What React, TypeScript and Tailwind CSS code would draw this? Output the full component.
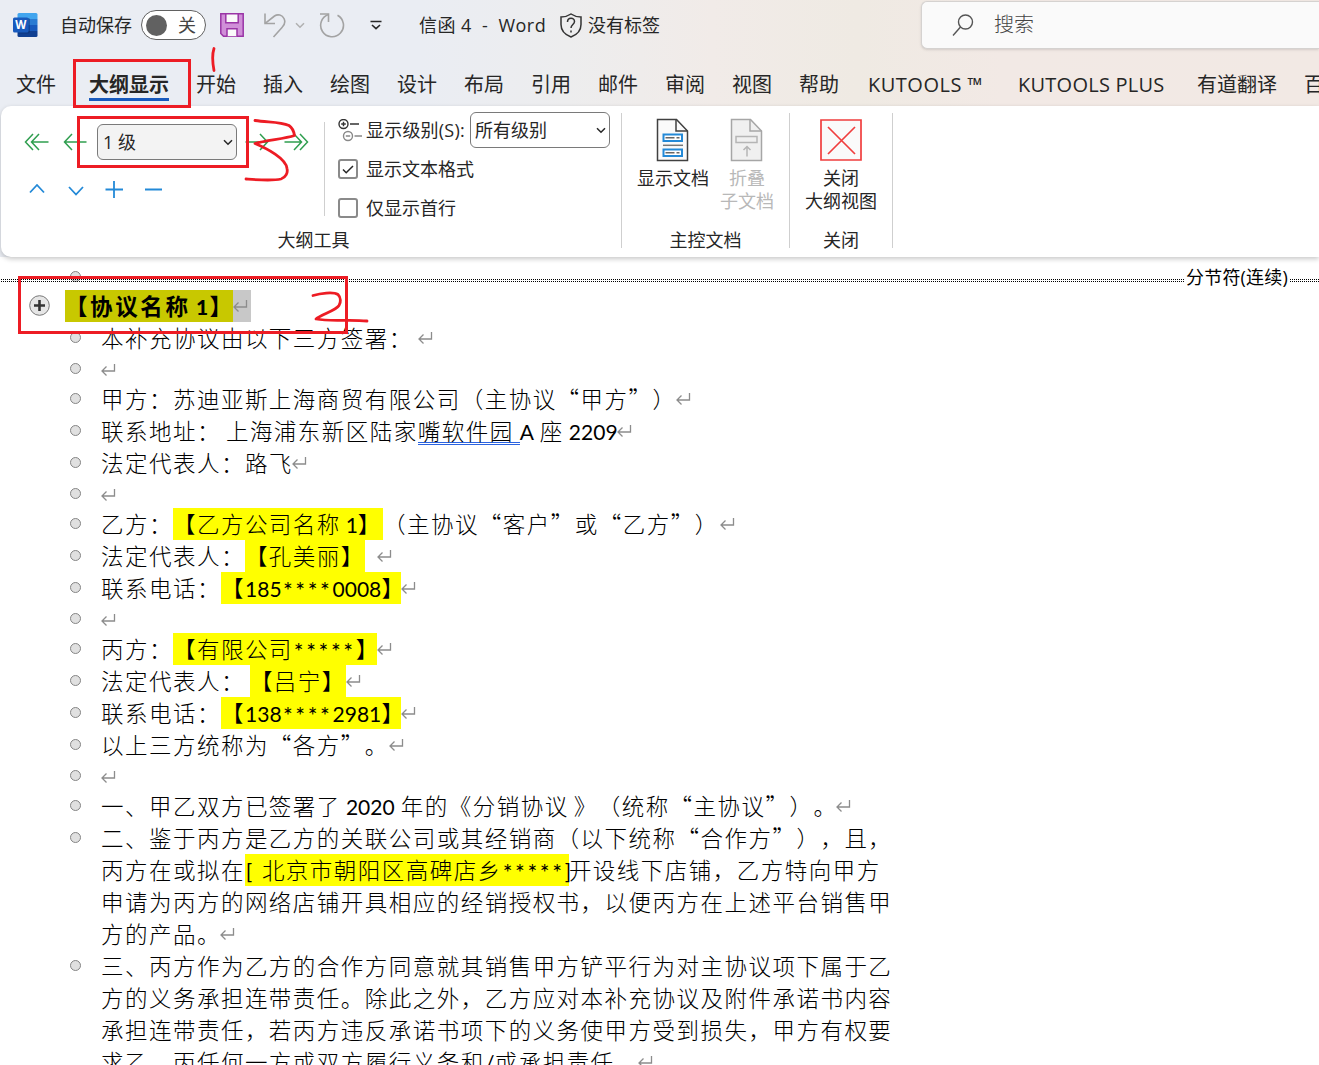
import type { ReactNode } from 'react';

const tabs = [
  { label: '开始', className: 'w-10' },
  { label: '插入', className: 'w-10' },
  { label: '绘图', className: 'w-10' },
  { label: '设计', className: 'w-10' },
  { label: '布局', className: 'w-10' },
  { label: '引用', className: 'w-10' },
  { label: '邮件', className: 'w-10' },
  { label: '审阅', className: 'w-10' },
  { label: '视图', className: 'w-10' },
  { label: '帮助', className: 'w-10' },
  { label: 'KUTOOLS ™', className: 'ml-[2px] w-[116px] tracking-[0.5px]' },
  { label: 'KUTOOLS PLUS', className: 'ml-[7px] w-[147px] tracking-[0.25px]' },
  { label: '有道翻译', className: 'ml-[5px] w-20' },
  { label: '百', className: 'w-10' },
];

function WordLogo() {
  return (
    <svg width="25" height="25" viewBox="0 0 25 25">
      <path d="M6 0h17a1.5 1.5 0 0 1 1.500 1.500V6H4.500V1.500A1.500 1.500 0 0 1 6 0z" fill="#41a5ee" />
      <path d="M4.500 6h20v6h-20z" fill="#2b7cd3" />
      <path d="M4.500 12h20v6h-20z" fill="#185abd" />
      <path d="M4.500 18h20v4.500A1.500 1.500 0 0 1 23 24H6a1.500 1.500 0 0 1-1.500-1.500z" fill="#103f91" />
      <path d="M5 5h10.500a1.500 1.500 0 0 1 1.500 1.500v12a2 2 0 0 1-2 2H5z" fill="#0b2c66" opacity=".45" />
      <rect x="0" y="4.500" width="15.500" height="15" rx="1.500" fill="#185abd" />
      <text x="7.700" y="16.300" textAnchor="middle" fontFamily="Open Sans, sans-serif" fontWeight="700" fontSize="11.500" fill="#fff">
        W
      </text>
    </svg>
  );
}

function SaveIcon() {
  return (
    <svg className="ml-[14px]" width="24" height="24" viewBox="0 0 24 24" fill="none" stroke="#9a35a6" strokeWidth="1.500">
      <path d="M.8.800h22.400v22.400H3.500L.800 20.500z" fill="#d08fd8" />
      <path d="M5.800.800h12.400v9H5.800z" fill="#fafafa" />
      <path d="M7 23.200v-7.400h10v7.400" fill="#fafafa" />
    </svg>
  );
}

function Chevron({ className }: { className?: string }) {
  return (
    <svg className={className} width="10" height="7" viewBox="0 0 10 7" fill="none" stroke="currentColor" strokeWidth="1.500">
      <path d="M1 1.200l4 4 4-4" />
    </svg>
  );
}

function TitleBar() {
  return (
    <div className="flex h-[50px] items-center pl-[13px] text-[18px] text-[#262626]">
      <WordLogo />
      <span className="ml-[22px] w-[72px] whitespace-nowrap">自动保存</span>
      <div className="ml-[9px] flex h-[30px] w-[65px] shrink-0 items-center justify-between rounded-full border border-[#616161] bg-white pl-1 pr-[9px]">
        <span className="h-[21px] w-[21px] rounded-full bg-[#616161]" />
        <span className="text-[#444]">关</span>
      </div>
      <SaveIcon />
      <svg className="ml-[20px]" width="22" height="25" viewBox="0 0 22 25" fill="none" stroke="#a3a3a3" strokeWidth="1.600">
        <path d="M1 .500v10h10" />
        <path d="M1.200 10.300L10.500 3A6.500 6.500 0 0 1 20 5.500c1.700 3.500.500 6.500-2 9L9.500 24" />
      </svg>
      <Chevron className="ml-[9px] text-[#b0b0b0]" />
      <svg className="ml-[14px]" width="26" height="26" viewBox="0 0 26 26" fill="none" stroke="#a3a3a3" strokeWidth="1.600">
        <path d="M1 2h8.500v8" />
        <path d="M9.500 2.500A11.400 11.400 0 1 0 18.500 3.300" />
      </svg>
      <svg className="ml-[25px]" width="12" height="12" viewBox="0 0 12 12" fill="none" stroke="#262626" strokeWidth="1.600">
        <path d="M.500 2.500h11M2 6l4 3.700L10 6" />
      </svg>
      <span className="ml-[37px] w-[128px] whitespace-pre tracking-[0.45px]">信函 4  -  Word</span>
      <svg className="ml-[13px]" width="22" height="25" viewBox="0 0 22 25" fill="none" stroke="#333" strokeWidth="1.500">
        <path d="M11 1c3 2 6 3 10 3v7.500c0 6-3.500 10-10 12.500C4.500 21.500 1 17.500 1 11.500V4c4 0 7-1 10-3z" />
        <path d="M7.500 9c0-5 7-5 7-.500 0 3-3.500 3-3.500 6.500M11 17.500v2" />
      </svg>
      <span className="ml-[6px] w-[73px] whitespace-nowrap">没有标签</span>
      <div className="ml-[260px] mt-[1px] flex h-[48px] flex-1 items-center self-start rounded-l-md border border-r-0 border-[#d5d2d0] bg-[#fafafa] pl-[30px] text-[20px] font-light text-[#444] shadow">
        <svg width="22" height="23" viewBox="0 0 22 23" fill="none" stroke="#555" strokeWidth="1.400">
          <circle cx="13.500" cy="8" r="7" />
          <path d="M8.500 13L1 21.500" />
        </svg>
        <span className="ml-[20px]">搜索</span>
      </div>
    </div>
  );
}

function TabBar() {
  return (
    <nav className="flex h-[56px] gap-[27px] overflow-hidden whitespace-nowrap pl-4 pt-[18px] text-[20px] leading-[33px] text-[#262626]">
      <span className="w-10 shrink-0">文件</span>
      <span className="ml-[6px] h-[33px] w-20 shrink-0 border-b-[3px] border-[#185abd] font-bold">大纲显示</span>
      {tabs.map((tab) => (
        <span key={tab.label} className={`shrink-0 ${tab.className}`}>
          {tab.label}
        </span>
      ))}
    </nav>
  );
}

function SelectBox({ label, className }: { label: string; className: string }) {
  return (
    <div className={`flex h-9 w-[140px] shrink-0 items-center justify-between rounded-md border border-[#7a7a7a] pr-[3px] text-[18px] ${className}`}>
      <span>{label}</span>
      <Chevron />
    </div>
  );
}

function OutlineButtons() {
  return (
    <div className="flex w-[319px] flex-col pl-[18px] pt-[18px]">
      <div className="flex h-9 items-center text-[#2f9e4f]">
        <svg width="25" height="18" viewBox="0 0 25 18" fill="none" stroke="currentColor" strokeWidth="1.500">
          <path d="M9 1L1.500 9 9 17M15 1L7.500 9l7.500 8M7.500 9H24.500" />
        </svg>
        <svg className="ml-[14px]" width="24" height="18" viewBox="0 0 24 18" fill="none" stroke="currentColor" strokeWidth="1.500">
          <path d="M9 1L1.500 9 9 17M1.500 9H23.500" />
        </svg>
        <SelectBox label="1 级" className="ml-[10px] bg-[#f3f3f3] pl-[5px] text-[#262626]" />
        <svg className="ml-[8px]" width="24" height="18" viewBox="0 0 24 18" fill="none" stroke="currentColor" strokeWidth="1.500">
          <path d="M15 1l7.500 8-7.500 8M22.500 9H.500" />
        </svg>
        <svg className="ml-[15px]" width="25" height="18" viewBox="0 0 25 18" fill="none" stroke="currentColor" strokeWidth="1.500">
          <path d="M16 1l7.500 8-7.500 8M10 1l7.500 8-7.500 8M17.500 9H.500" />
        </svg>
      </div>
      <svg className="ml-1 mt-[20px]" width="136" height="20" viewBox="0 0 136 20" fill="none" stroke="#2389d7" strokeWidth="1.800">
        <path d="M2 12.500l7-7.500 7 7.500M41 7l7 7.500L55 7M86 1v17M77.500 9.500H95M117 9.500h17" />
      </svg>
    </div>
  );
}

function CheckRow({ label, checked }: { label: string; checked?: boolean }) {
  return (
    <div className="flex h-[39px] items-center gap-2">
      <span className="-mt-px flex h-5 w-5 items-center justify-center rounded-[3px] border-2 border-[#8a8a8a]">
        {checked && (
          <svg width="12" height="9" viewBox="0 0 12 9" fill="none" stroke="#262626" strokeWidth="1.500">
            <path d="M1 4.500L4.200 7.700 11 1" />
          </svg>
        )}
      </span>
      <span>{label}</span>
    </div>
  );
}

function LevelIcon() {
  return (
    <svg width="24" height="23" viewBox="0 0 24 23" fill="none" stroke="#333" strokeWidth="1.400">
      <circle cx="5.500" cy="5" r="4.500" />
      <path d="M5.500 2.700v4.600M3.200 5h4.600M12 5h9" />
      <g stroke="#888">
        <circle cx="10" cy="17" r="4.500" />
        <path d="M7.800 17h4.400M16.500 17h7.500" />
      </g>
    </svg>
  );
}

function Divider() {
  return <span className="mt-[7px] h-[135px] w-px bg-[#cfcfcf]" />;
}

function Ribbon() {
  return (
    <section className="relative ml-px flex h-[151px] rounded-l-[10px] bg-white pl-[5px] text-[18px] leading-[23px] text-[#262626] shadow-[0_2px_5px_rgba(0,0,0,0.22)]">
      <div className="flex w-[615px] flex-col">
        <div className="flex h-[123px]">
          <OutlineButtons />
          <span className="-ml-px mt-4 h-[94px] w-px bg-[#cfcfcf]" />
          <div className="ml-[13px] flex flex-col pt-[5px]">
            <div className="flex h-[39px] items-center pb-[1px]">
              <LevelIcon />
              <span className="ml-1 w-[104px] whitespace-nowrap tracking-[0.2px]">显示级别(S):</span>
              <SelectBox label="所有级别" className="bg-white pl-1" />
            </div>
            <CheckRow label="显示文本格式" checked />
            <CheckRow label="仅显示首行" />
          </div>
        </div>
        <span className="text-center">大纲工具</span>
      </div>
      <Divider />
      <div className="flex w-[167px] flex-col items-center">
        <div className="flex h-[123px] w-full pl-[13px] pt-[12px]">
          <div className="flex w-[76px] flex-col items-center">
            <svg width="34" height="44" viewBox="0 0 34 44" fill="none" stroke="#404040" strokeWidth="1.500">
              <path d="M1.500 1.500h19l11 11.500v29.500h-30z" fill="#fafafa" />
              <path d="M20 1.500V13h11.500" />
              <path d="M7.500 16.500h18.500v6.500H7.500zM7.500 31.500h18.500V38H7.500z" fill="#fff" stroke="#2389d7" strokeWidth="2" />
              <path d="M7 27.300h20" stroke="#777" />
              <path d="M9.500 19.700h9M20.500 19.700h3M9.500 34.700h9M20.500 34.700h3" stroke="#666" />
            </svg>
            <span className="mt-[5px] whitespace-nowrap">显示文档</span>
          </div>
          <div className="flex w-[72px] flex-col items-center text-center text-[#b8b8b8]">
            <svg width="34" height="44" viewBox="0 0 34 44" fill="none" stroke="#a6a6a6" strokeWidth="1.500">
              <path d="M1.500 1.500h19l11 11.500v29.500h-30z" fill="#f0f0f0" />
              <path d="M20 1.500V13h11.500" />
              <path d="M6 18.500h21v6H6zM17 38.500V29M13.500 32l3.500-3.500 3.500 3.500" stroke="#b5b5b5" />
            </svg>
            <span className="mt-[5px]">
              折叠
              <br />
              子文档
            </span>
          </div>
        </div>
        <span>主控文档</span>
      </div>
      <Divider />
      <div className="flex w-[102px] flex-col items-center">
        <div className="flex h-[123px] flex-col items-center pt-[13px] text-center">
          <svg width="42" height="42" viewBox="0 0 42 42" fill="none" stroke="#f03e3e" strokeWidth="1.700">
            <path d="M1 1h40v40H1z" fill="#fafafa" />
            <path d="M8 8l27 27M35 8L8 35" />
          </svg>
          <span className="mt-[6px] whitespace-nowrap">
            关闭
            <br />
            大纲视图
          </span>
        </div>
        <span>关闭</span>
      </div>
      <Divider />
    </section>
  );
}

function Return({ className = 'ml-px' }: { className?: string }) {
  return (
    <svg className={`mt-[9px] shrink-0 ${className}`} width="15" height="13" viewBox="0 0 15 13" fill="none" stroke="#8c8c8c" strokeWidth="1.300">
      <path d="M13.500 1v7H1M5.500 3.500L1 8l4.500 4.500" />
    </svg>
  );
}

function Line({ children, bullet = true }: { children: ReactNode; bullet?: boolean }) {
  return (
    <div className="flex h-8 items-start whitespace-pre pl-[70px]">
      <span className="mr-[20px] mt-[10px] flex w-[11px] shrink-0">
        {bullet && <span className="h-[11px] w-[11px] rounded-full border border-[#858585] bg-[#e0e0e0]" />}
      </span>
      {children}
    </div>
  );
}

function BlankLine() {
  return (
    <div className="flex h-[29px] items-start pl-[70px]">
      <span className="mr-[19px] mt-[9px] h-[11px] w-[11px] rounded-full border border-[#858585] bg-[#e0e0e0]" />
      <Return />
    </div>
  );
}

function Mark({ children, className = '' }: { children: ReactNode; className?: string }) {
  return <span className={`flex h-8 shrink-0 items-start bg-[#ffff00] ${className}`}>{children}</span>;
}

// Western runs use a different face from the Chinese text around them
function Latin({ children, className }: { children: ReactNode; className: string }) {
  return (
    <span className={`flex shrink-0 justify-center font-['Lato','Noto_Sans_CJK_SC',sans-serif] text-[21px] font-normal leading-[33px] tracking-normal ${className}`}>
      {children}
    </span>
  );
}

function Stars({ count }: { count: number }) {
  return (
    <span className="shrink-0 pl-[1px] font-['Lato',sans-serif] text-[23px] font-normal leading-[36px] tracking-[2.600px]">
      {'*'.repeat(count)}
    </span>
  );
}

function Phone({ start, end }: { start: string; end: string }) {
  return (
    <Mark className="w-[180px]">
      【<Latin className="w-[37px]">{start}</Latin>
      <Stars count={4} />
      <Latin className="w-[49px]">{end}</Latin>】
    </Mark>
  );
}

function SectionBreak() {
  return (
    <div className="relative flex h-[33px] items-start pt-[8px] text-[18px] leading-[24px] tracking-normal text-black">
      <span className="absolute left-[70px] top-[14px] h-[11px] w-[11px] rounded-full border border-[#858585] bg-[#e0e0e0]" />
      <span className="relative ml-px mt-[14px] h-[3px] w-[1183px] border-y border-dotted border-black" />
      <span className="w-[106px] whitespace-nowrap text-center font-['Open_Sans','Noto_Sans_CJK_SC',sans-serif] font-normal tracking-[0.2px]">
        分节符(连续)
      </span>
      <span className="mt-[14px] h-[3px] flex-1 border-y border-dotted border-black" />
    </div>
  );
}

function Document() {
  return (
    <main className="font-['Noto_Sans_CJK_SC',sans-serif] text-[22.500px] font-light leading-[30px] tracking-[1.480px] text-black [text-spacing-trim:space-all]">
      <SectionBreak />
      <div className="flex h-8 items-start pl-[29px]">
        <svg className="mt-[5px]" width="21" height="21" viewBox="0 0 21 21">
          <circle cx="10.500" cy="10.500" r="9.800" fill="#e6e6e6" stroke="#777" />
          <path d="M10.500 5v11M5 10.500h11" stroke="#333" strokeWidth="2.600" />
        </svg>
        <span className="ml-[15px] flex h-8 w-[168px] items-start whitespace-nowrap bg-[#c8c800] font-bold tracking-[2.600px]">
          【协议名称
          <Latin className="ml-[4px] w-[15px] !font-black">1</Latin>
          】
        </span>
        <span className="flex h-8 w-[18px] items-start bg-[#c8c8c8]">
          <Return className="ml-0" />
        </span>
      </div>
      <Line>
        本补充协议由以下三方签署：<Return className="ml-[5px]" />
      </Line>
      <BlankLine />
      <Line>
        甲方：苏迪亚斯上海商贸有限公司（主协议“甲方”）<Return className="-ml-px" />
      </Line>
      <Line>
        联系地址：<span className="ml-[5px]">上海浦东新区陆家</span>
        <span className="h-[30px] w-[102px] border-b-[3px] border-double border-[#2b63e0]">嘴软件园</span>
        <Latin className="w-[14px]">A</Latin>
        <span className="ml-[6px]">座</span>
        <Latin className="ml-[5px] w-[49px]">2209</Latin>
        <Return className="-ml-px" />
      </Line>
      <Line>
        法定代表人：路飞<Return className="-ml-px" />
      </Line>
      <BlankLine />
      <Line>
        乙方：
        <Mark className="w-[210px]">
          【乙方公司名称<Latin className="ml-[5px] w-[12px]">1</Latin>】
        </Mark>
        （主协议“客户”或“乙方”）<Return />
      </Line>
      <Line>
        法定代表人：<Mark className="w-[120px]">【孔美丽】</Mark>
        <Return className="ml-[12px]" />
      </Line>
      <Line>
        联系电话：
        <Phone start="185" end="0008" />
        <Return className="ml-0" />
      </Line>
      <BlankLine />
      <Line>
        丙方：
        <Mark className="w-[204px]">
          【有限公司
          <Stars count={5} />】
        </Mark>
        <Return className="ml-0" />
      </Line>
      <Line>
        法定代表人：<Mark className="ml-[5px] w-[96px]">【吕宁】</Mark>
        <Return className="ml-0" />
      </Line>
      <Line>
        联系电话：
        <Phone start="138" end="2981" />
        <Return className="ml-0" />
      </Line>
      <Line>
        以上三方统称为“各方”。<Return className="ml-0" />
      </Line>
      <BlankLine />
      <Line>
        一、甲乙双方已签署了<Latin className="ml-[5px] w-[49px]">2020</Latin>
        <span className="ml-[6px]">年的《分销协议</span>
        <span className="ml-[5px]">》（统称“主协议”）。</span>
        <Return className="-ml-px" />
      </Line>
      <Line>二、鉴于丙方是乙方的关联公司或其经销商（以下统称“合作方”），且，</Line>
      <Line bullet={false}>
        丙方在或拟在
        <Mark className="w-[324px]">
          <Latin className="mr-[9px] w-[8px]">[</Latin>北京市朝阳区高碑店乡
          <Stars count={5} />
          <Latin className="w-[7px]">]</Latin>
        </Mark>
        开设线下店铺，乙方特向甲方
      </Line>
      <Line bullet={false}>申请为丙方的网络店铺开具相应的经销授权书，以便丙方在上述平台销售甲</Line>
      <Line bullet={false}>
        方的产品。<Return className="-ml-px" />
      </Line>
      <Line>三、丙方作为乙方的合作方同意就其销售甲方铲平行为对主协议项下属于乙</Line>
      <Line bullet={false}>方的义务承担连带责任。除此之外，乙方应对本补充协议及附件承诺书内容</Line>
      <Line bullet={false}>承担连带责任，若丙方违反承诺书项下的义务使甲方受到损失，甲方有权要</Line>
      <Line bullet={false}>
        求乙、丙任何一方或双方履行义务和<Latin className="w-[10px]">/</Latin>或承担责任。<Return className="-ml-px" />
      </Line>
    </main>
  );
}

function Annotations() {
  return (
    <svg className="pointer-events-none absolute left-0 top-0" width="400" height="340" viewBox="0 0 400 340" fill="none" stroke="#ed1c24" strokeWidth="3">
      <path d="M74.500 60.500h115v46h-115zM78.500 117.500h169v49h-169zM19.500 277.500h327v55h-327z" />
      <g strokeLinecap="round" strokeLinejoin="round" strokeWidth="2.800">
        <path d="M214 48.500c-2 6-1.500 14 0 22" />
        <path d="M255 120.500c13 2 25 1 34 5 3 2 5 7 5.500 10C284 139 266 140 255 143.500c12 5 31 15 32 25 1 4-1 9-6 10.500-9 2-21 1-35 0" />
        <path d="M313 295.500c7-2 20-4 25-1 3 3 3 8 1 11-3 5-18 9-23 13.500 15 3 33 0 51 2" />
      </g>
    </svg>
  );
}

export default function App() {
  return (
    <div className="relative h-[1065px] w-[1319px] overflow-hidden bg-white font-['Open_Sans','Noto_Sans_CJK_SC',sans-serif]">
      <header className="h-[257px] bg-[linear-gradient(90deg,#eaedf3_0%,#eaedf3_32%,#ededee_43%,#f1ebe8_54%,#efeae3_65%,#f2e9e5_76%,#f2e9e4_100%)]">
        <TitleBar />
        <TabBar />
        <Ribbon />
      </header>
      <Document />
      <Annotations />
    </div>
  );
}
